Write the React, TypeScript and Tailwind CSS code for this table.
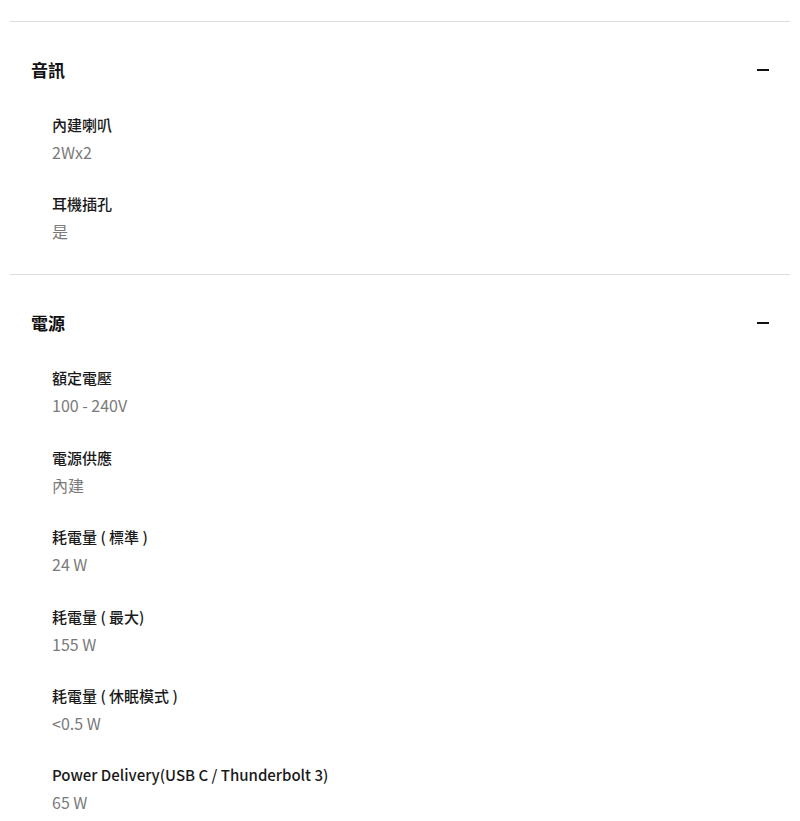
const sections = [
  {
    title: "音訊",
    items: [
      { label: "內建喇叭", value: "2Wx2" },
      { label: "耳機插孔", value: "是" },
    ],
  },
  {
    title: "電源",
    items: [
      { label: "額定電壓", value: "100 - 240V" },
      { label: "電源供應", value: "內建" },
      { label: "耗電量 ( 標準 )", value: "24 W" },
      { label: "耗電量 ( 最大)", value: "155 W" },
      { label: "耗電量 ( 休眠模式 )", value: "<0.5 W" },
      { label: "Power Delivery(USB C / Thunderbolt 3)", value: "65 W" },
    ],
  },
];

export default function App() {
  return (
    <div
      className="min-h-screen bg-white px-[10px] pt-[21px]"
      style={{ fontFamily: '"Noto Sans CJK TC", "Noto Sans", sans-serif' }}
    >
      {sections.map((s) => (
        <section key={s.title} className="border-t border-[#dcdcdc] pb-[29px]">
          <div className="flex items-center justify-between px-[21px] pt-[36px]">
            <h3 className="text-[17px] font-bold leading-[24px] text-[#111]">{s.title}</h3>
            <span className="block h-[2px] w-[12px] bg-[#111]" />
          </div>
          <div className="flex flex-col gap-[25.4px] pl-[42px] pt-[30px]">
            {s.items.map((it) => (
              <div key={it.label}>
                <div className="text-[15px] font-medium leading-[26px] text-[#1a1a1a]">{it.label}</div>
                <div className="text-[16px] leading-[28px] text-[#7a7a7a]">{it.value}</div>
              </div>
            ))}
          </div>
        </section>
      ))}
    </div>
  );
}
